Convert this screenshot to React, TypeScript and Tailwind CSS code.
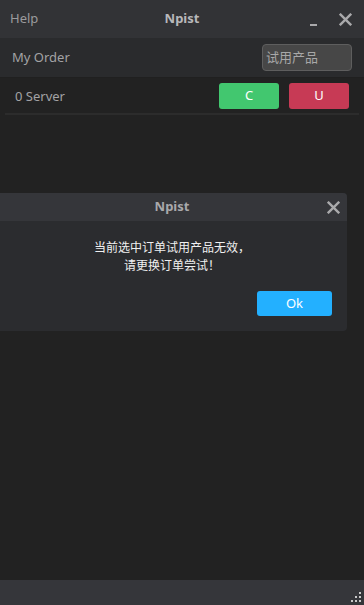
import React from "react";

const font = { fontFamily: '"Noto Sans", "Noto Sans CJK SC", sans-serif' };

function CloseIcon({ size = 13, color = "#a9a9ab" }: { size?: number; color?: string }) {
  return (
    <svg width={size} height={size} viewBox="0 0 12 12">
      <path d="M1.5 1.5 L10.5 10.5 M10.5 1.5 L1.5 10.5" stroke={color} strokeWidth="2.2" strokeLinecap="square" />
    </svg>
  );
}

export default function App() {
  return (
    <div className="relative w-[364px] h-[605px] bg-[#222222] flex flex-col overflow-hidden text-[13px]" style={font}>
      {/* Title bar */}
      <div className="h-[38px] bg-[#323336] flex items-center px-[10px] relative">
        <span className="text-[#9b9b9d]">Help</span>
        <span className="absolute left-0 right-0 text-center font-bold text-[#b8b8ba] pointer-events-none">Npist</span>
        <div className="ml-auto flex items-center gap-[22px] pr-[2px]">
          <div className="w-[7px] h-[2px] bg-[#a9a9ab] mt-[12px]"></div>
          <CloseIcon />
        </div>
      </div>

      {/* Order row */}
      <div className="h-[40px] bg-[#2a2b2d] flex items-center pl-[12px] pr-[12px] border-b border-[#202020]">
        <span className="text-[#a3a3a5] pt-[1px]">My Order</span>
        <div className="ml-auto w-[90px] h-[27px] bg-[#474747] border border-[#5e5e5e] rounded-[4px] flex items-center px-[3px] text-[#a8a8a8]">
          试用产品
        </div>
      </div>

      {/* Server row */}
      <div className="h-[35px] flex items-center pl-[15px] pr-[15px]">
        <span className="text-[#a3a3a5] pt-[3px]">0 Server</span>
        <div className="ml-auto flex gap-[10px] pt-[1px]">
          <button className="w-[60px] h-[26px] rounded-[3px] bg-[#42c76f] text-white">C</button>
          <button className="w-[60px] h-[26px] rounded-[3px] bg-[#c73a55] text-white">U</button>
        </div>
      </div>
      <div className="mx-[5px] h-[2px] bg-[#2c2c2c]"></div>

      <div className="flex-1"></div>

      {/* Bottom bar */}
      <div className="h-[25px] bg-[#35363a] flex items-end justify-end pr-[2px] pb-[2px]">
        <svg width="11" height="11" viewBox="0 0 11 11">
          <rect x="8" y="0" width="2" height="2" fill="#c8c8c8" />
          <rect x="4" y="4" width="2" height="2" fill="#c8c8c8" />
          <rect x="8" y="4" width="2" height="2" fill="#c8c8c8" />
          <rect x="0" y="8" width="2" height="2" fill="#c8c8c8" />
          <rect x="4" y="8" width="2" height="2" fill="#c8c8c8" />
          <rect x="8" y="8" width="2" height="2" fill="#c8c8c8" />
        </svg>
      </div>

      {/* Dialog */}
      <div className="absolute left-[-3px] top-[193px] w-[350px] h-[138px] rounded-[4px] overflow-hidden bg-[#2b2c2f] flex flex-col">
        <div className="h-[28px] bg-[#35363a] flex items-center justify-center relative">
          <span className="font-bold text-[#a9a9ab]">Npist</span>
          <div className="absolute right-[7px] top-[8px]">
            <CloseIcon />
          </div>
        </div>
        <div className="flex flex-col items-center pt-[18px] text-[#f0f0f0] text-[12px] leading-[18px]">
          <span>当前选中订单试用产品无效，</span>
          <span>请更换订单尝试！</span>
        </div>
        <div className="flex justify-end pr-[15px] mt-[16px]">
          <button className="w-[75px] h-[25px] rounded-[3px] bg-[#23b0ff] text-white text-[13px]">Ok</button>
        </div>
      </div>
    </div>
  );
}
